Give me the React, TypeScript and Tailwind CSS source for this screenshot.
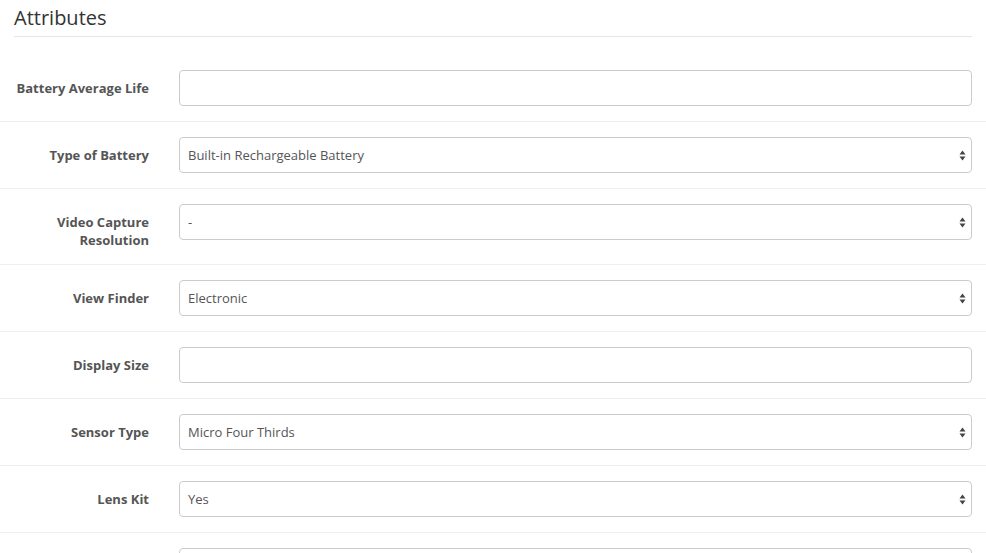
import React from 'react';

type Field = {
  label: string[];
  kind: 'input' | 'select';
  value?: string;
};

const fields: Field[] = [
  { label: ['Battery Average Life'], kind: 'input' },
  { label: ['Type of Battery'], kind: 'select', value: 'Built-in Rechargeable Battery' },
  { label: ['Video Capture', 'Resolution'], kind: 'select', value: '-' },
  { label: ['View Finder'], kind: 'select', value: 'Electronic' },
  { label: ['Display Size'], kind: 'input' },
  { label: ['Sensor Type'], kind: 'select', value: 'Micro Four Thirds' },
  { label: ['Lens Kit'], kind: 'select', value: 'Yes' },
  { label: [], kind: 'input' },
];

function SelectArrows() {
  return (
    <svg width="7" height="11" viewBox="0 0 7 11" className="shrink-0">
      <path d="M3.5 0.5 L6.5 4.5 L0.5 4.5 Z" fill="#444" />
      <path d="M0.5 6.5 L6.5 6.5 L3.5 10.5 Z" fill="#444" />
    </svg>
  );
}

function Row({ field }: { field: Field }) {
  return (
    <div className="flex border-b border-[#eeeeee] py-[15px]">
      <div className="w-[149px] shrink-0 pt-[9px] text-right text-[13px] font-bold leading-[18px] text-[#555555]">
        {field.label.map((l) => (
          <div key={l}>{l}</div>
        ))}
      </div>
      <div className="ml-[30px] mr-[14px] flex-1">
        <div className="flex h-[36px] items-center rounded-[4px] border border-[#cccccc] bg-white pl-[8px] pr-[5px] text-[13px] text-[#555555]">
          <span className="flex-1 pt-[2px]">{field.value ?? ''}</span>
          {field.kind === 'select' && <SelectArrows />}
        </div>
      </div>
    </div>
  );
}

export default function App() {
  return (
    <div className="min-h-screen bg-white font-['Open_Sans',sans-serif]">
      <div className="px-[14px]">
        <h2 className="h-[37px] border-b border-[#e5e5e5] pt-[5px] text-[20px] font-normal leading-[26px] text-[#333333]">
          Attributes
        </h2>
      </div>
      <div className="mt-[18px]">
        {fields.map((f, i) => (
          <Row key={i} field={f} />
        ))}
      </div>
    </div>
  );
}
